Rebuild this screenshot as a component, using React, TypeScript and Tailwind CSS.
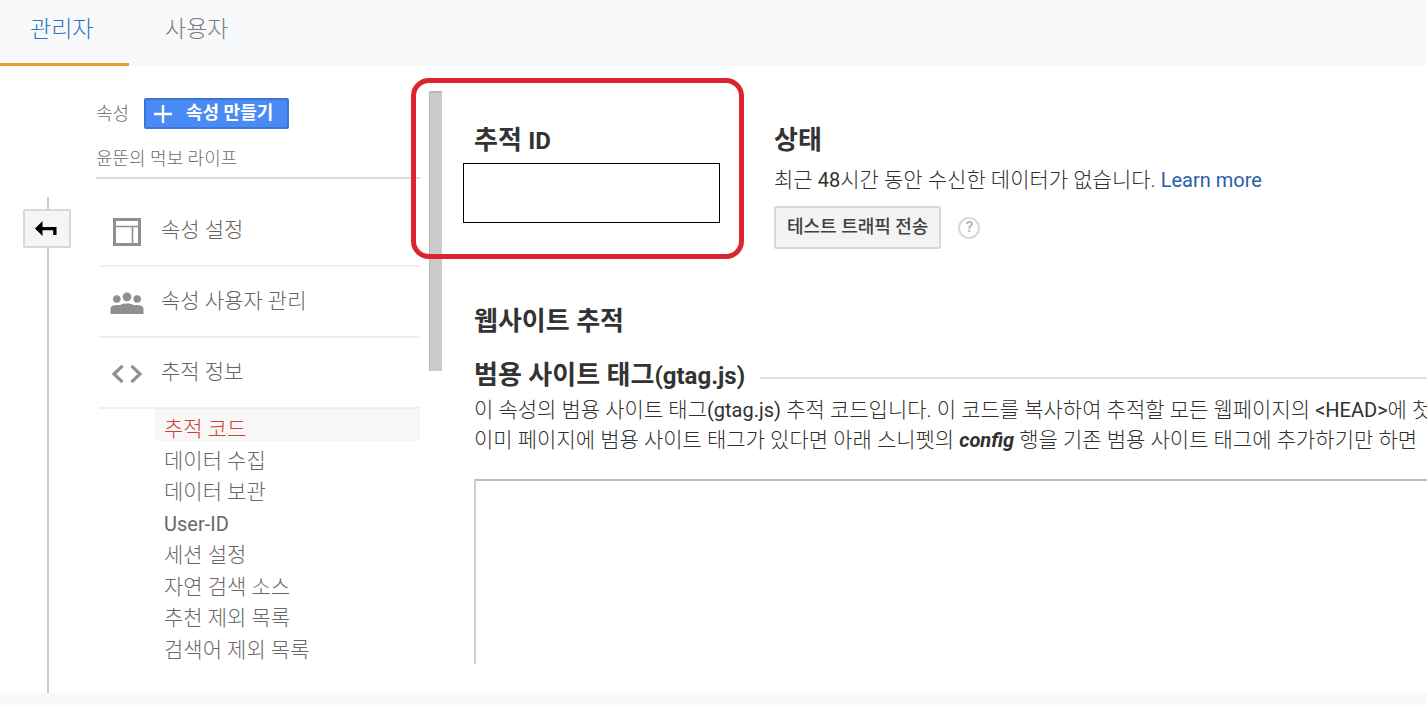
import type { ReactNode } from "react";

const subItems = [
  "추적 코드",
  "데이터 수집",
  "데이터 보관",
  "User-ID",
  "세션 설정",
  "자연 검색 소스",
  "추천 제외 목록",
  "검색어 제외 목록",
];

function LayoutIcon() {
  return (
    <svg viewBox="0 0 28 28" className="h-7 w-7" fill="none" stroke="#8f8f8f">
      <rect x="1.5" y="1.5" width="25" height="25" strokeWidth="3" />
      <path d="M3 8.5H25M19.5 9V25" strokeWidth="1.6" />
    </svg>
  );
}

function PeopleIcon() {
  return (
    <svg viewBox="0 0 34 22" className="h-[22px] w-[34px]" fill="#8f8f8f">
      <circle cx="17" cy="4.8" r="4.4" />
      <circle cx="6.8" cy="7" r="3.8" />
      <circle cx="27.2" cy="7" r="3.8" />
      <path d="M0.5 22V16.5C0.5 13.5 6 12.6 10 13.2C12.5 11 21.5 11 24 13.2C28 12.6 33.5 13.5 33.5 16.5V22Z" />
    </svg>
  );
}

function CodeIcon() {
  return (
    <svg viewBox="0 0 32 20" className="h-5 w-8" fill="none" stroke="#8f8f8f" strokeWidth="3.2">
      <path d="M11.5 1.8L3 10L11.5 18.2M20.5 1.8L29 10L20.5 18.2" />
    </svg>
  );
}

function Latin({ children }: { children: ReactNode }) {
  return <span className="text-[20px] leading-none font-normal">{children}</span>;
}

function MenuItem({ icon, label }: { icon: ReactNode; label: string }) {
  return (
    <a href="#" className="ml-[3px] flex h-[71px] items-center border-b-2 border-[#efefef] text-[21px] text-[#646464]">
      <span className="mr-4 ml-[10px] flex w-9 shrink-0 justify-center pt-0.5">{icon}</span>
      {label}
    </a>
  );
}

function Sidebar() {
  return (
    <aside className="w-[324px] shrink-0 pt-8">
      <div className="flex items-center">
        <span className="w-12 text-[18px] text-[#6c6c6c]">속성</span>
        <button className="flex h-[31px] items-center rounded-xs border-2 border-[#3a76d6] bg-[#4a8af4] pr-3.5 pb-0.5 pl-2 text-[18px] leading-none font-bold text-white">
          <svg viewBox="0 0 18 18" className="mt-0.5 mr-3.5 h-[18px] w-[18px]" stroke="currentColor" strokeWidth="2.4">
            <path d="M9 0V18M0 9H18" />
          </svg>
          속성 만들기
        </button>
      </div>
      <div className="mt-3 h-[38px] border-b-2 border-[#dadada] pt-1 text-[18px] text-[#6c6c6c]">
        윤뚠의 먹보 라이프
      </div>
      <nav className="pt-[17px]">
        <MenuItem icon={<LayoutIcon />} label="속성 설정" />
        <MenuItem icon={<PeopleIcon />} label="속성 사용자 관리" />
        <MenuItem icon={<CodeIcon />} label="추적 정보" />
        <ul className="ml-[59px] grid h-[252px] auto-rows-fr">
          {subItems.map((item, i) => (
            <li key={item} className={i === 0 ? "bg-[#f7f7f7]" : ""}>
              <a
                href="#"
                className={`block pt-2 pl-[9px] leading-6 ${i === 0 ? "text-[#c9452f]" : "text-[#686868]"} ${
                  item === "User-ID" ? "text-[20px] font-normal" : "text-[21px]"
                }`}
              >
                {item}
              </a>
            </li>
          ))}
        </ul>
      </nav>
    </aside>
  );
}

function Rail() {
  return (
    <div className="flex w-24 shrink-0 flex-col items-start pt-[131px]">
      <div className="ml-[47px] h-3 w-0.5 bg-[#cccccc]" />
      <button
        aria-label="뒤로"
        className="ml-[23px] flex h-[39px] w-12 items-center justify-center rounded-xs border-2 border-[#d8d8d8] bg-[#f5f5f5]"
      >
        <svg viewBox="0 0 22 16" className="mr-0.5 h-4 w-[22px]">
          <path d="M0 7.5L7.5 0V6.1H21.5V14H18.2V9.2H7.5V15Z" fill="#000" />
        </svg>
      </button>
      <div className="ml-[47px] w-0.5 flex-1 bg-[#cccccc]" />
    </div>
  );
}

function Content() {
  return (
    <main className="min-w-0 flex-1 overflow-hidden pt-[58px] text-[#303030]">
      <div className="flex">
        <section className="w-[311px] shrink-0">
          <label htmlFor="tracking-id" className="block pl-[11px] text-[26px] leading-8 font-bold text-[#333]">
            추적 <span className="text-[24px] leading-none">ID</span>
          </label>
          <input
            id="tracking-id"
            readOnly
            className="mt-[7px] block h-[60px] w-[257px] border border-black bg-white px-3 text-[21px] outline-none"
          />
        </section>
        <section>
          <h2 className="text-[26px] leading-8 font-bold text-[#333]">상태</h2>
          <p className="mt-[9px] text-[21px] leading-[30px] whitespace-nowrap">
            최근 <Latin>48</Latin>시간 동안 수신한 데이터가 없습니다.{" "}
            <a href="#" className="text-[20px] leading-none font-normal text-[#2a5da8]">
              Learn more
            </a>
          </p>
          <div className="mt-[11px] flex items-center">
            <button className="h-[43px] rounded-xs border-2 border-[#d8d8d8] bg-[#f3f3f3] px-[11px] pb-0.5 text-[18px] leading-none font-medium text-[#404040]">
              테스트 트래픽 전송
            </button>
            <button
              aria-label="도움말"
              className="ml-[17px] grid h-[22px] w-[22px] place-items-center rounded-full border-2 border-[#d8d8d8] text-[15px] leading-none font-bold text-[#b8b8b8]"
            >
              ?
            </button>
          </div>
        </section>
      </div>

      <section className="pl-[11px]">
        <h2 className="mt-14 text-[26px] leading-8 font-bold text-[#333]">웹사이트 추적</h2>
        <div className="mt-[22px] flex items-center">
          <h3 id="gtag-title" className="text-[26px] leading-8 font-bold whitespace-nowrap text-[#333]">
            범용 사이트 태그<span className="text-[24px] leading-none">(gtag.js)</span>
          </h3>
          <div className="mt-1.5 ml-[15px] h-0.5 flex-1 bg-[#e2e2e2]" />
        </div>
        <p className="mt-1 text-[21px] leading-[30px] whitespace-nowrap">
          이 속성의 범용 사이트 태그<Latin>(gtag.js)</Latin> 추적 코드입니다. 이 코드를 복사하여 추적할 모든
          웹페이지의 <Latin>&lt;HEAD&gt;</Latin>에 첫
          <br />
          이미 페이지에 범용 사이트 태그가 있다면 아래 스니펫의{" "}
          <em className="text-[20px] leading-none font-bold">config</em> 행을 기존 범용 사이트 태그에 추가하기만 하면
        </p>
        <textarea
          readOnly
          aria-labelledby="gtag-title"
          className="mt-6 block h-[185px] w-full resize-none border-t-2 border-l-2 border-t-[#bdbdbd] border-l-[#d0d0d0] outline-none"
        />
      </section>
    </main>
  );
}

export default function App() {
  return (
    <div
      lang="ko"
      className="flex min-h-screen flex-col overflow-hidden bg-[#f8f9fb] font-['Roboto','Noto_Sans_CJK_KR',sans-serif] font-light"
    >
      <header className="flex h-[66px] shrink-0 text-[23px] leading-[60px]">
        <a href="#" className="w-[129px] border-b-3 border-[#e8a02c] pl-[30px] text-[#2f74bd]">
          관리자
        </a>
        <a href="#" className="pl-9 text-[#7c7c7c]">
          사용자
        </a>
      </header>
      <div className="relative flex flex-1 bg-white">
        <Rail />
        <Sidebar />
        <div className="mt-[25px] mr-[21px] ml-[9px] h-[280px] w-[13px] shrink-0 border-t-2 border-l border-[#b8b8b8] bg-[#cbcbcb]" />
        <Content />
        <div className="pointer-events-none absolute top-3 left-[411px] h-[181px] w-[333px] rounded-[18px] border-5 border-[#dc242c]" />
      </div>
      <footer className="h-3 shrink-0" />
    </div>
  );
}
